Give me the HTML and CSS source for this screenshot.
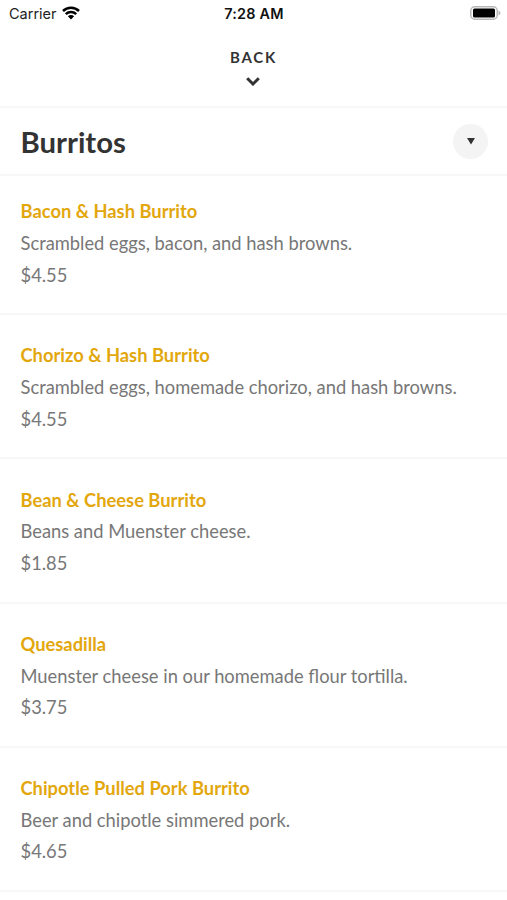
FILE: index.html
```html
<!DOCTYPE html>
<html lang="en">
<head>
<meta charset="utf-8">
<title>Burritos</title>
<link rel="stylesheet" href="styles.css">
</head>
<body>
<div class="status">
  <div class="carrier"><span>Carrier</span>
    <svg class="wifi" viewBox="0 0 18 14" width="18" height="14"><path d="M9 13.500 5.900 10.300a4.400 4.400 0 0 1 6.200 0z" fill="#000"/><path d="M3.800 8.100a7.400 7.400 0 0 1 10.400 0M1 5a11.400 11.400 0 0 1 16 0" fill="none" stroke="#000" stroke-width="2.500"/></svg>
  </div>
  <time class="clock">7:28 AM</time>
  <svg class="battery" viewBox="0 0 31 14" width="31" height="14"><rect x=".75" y=".75" width="26.500" height="12.500" rx="4" fill="#fff" stroke="#b8b8b8" stroke-width="1.500"/><rect x="3" y="2.500" width="22" height="9" rx="1.500" fill="#000"/><path d="M28.500 4.500v5q2-.8 2-2.500t-2-2.500" fill="#b8b8b8"/></svg>
</div>
<header class="back">
  <span class="back-label">BACK</span>
  <svg viewBox="0 0 14 9" width="14" height="9"><path d="m1.200 1.200 5.800 5.800 5.800-5.800" fill="none" stroke="#333" stroke-width="3"/></svg>
</header>
<div class="section">
  <h1>Burritos</h1>
  <button class="toggle" aria-label="Choose section"><svg viewBox="0 0 8 7" width="8" height="7"><path d="M0 0h8L4 6.500z" fill="#333"/></svg></button>
</div>
<main>
  <article><h2>Bacon &amp; Hash Burrito</h2><p>Scrambled eggs, bacon, and hash browns.</p><p>$4.55</p></article>
  <article><h2>Chorizo &amp; Hash Burrito</h2><p>Scrambled eggs, homemade chorizo, and hash browns.</p><p>$4.55</p></article>
  <article><h2>Bean &amp; Cheese Burrito</h2><p>Beans and Muenster cheese.</p><p>$1.85</p></article>
  <article><h2>Quesadilla</h2><p>Muenster cheese in our homemade flour tortilla.</p><p>$3.75</p></article>
  <article><h2>Chipotle Pulled Pork Burrito</h2><p>Beer and chipotle simmered pork.</p><p>$4.65</p></article>
</main>
</body>
</html>
```
FILE: styles.css
```css
* { box-sizing: border-box; margin: 0; padding: 0; }
body { background: #fff; font-family: Lato, sans-serif; color: #333; height: 900px; overflow: hidden; }
.status { display: grid; grid-template-columns: 1fr auto 1fr; align-items: center; height: 27px; padding: 0 8px 0 9px; font: 14.500px Inter, sans-serif; color: #222; }
.carrier { display: flex; align-items: center; gap: 5px; }
.wifi { margin-top: -2px; }
.clock { font-size: 14.400px; font-weight: 600; letter-spacing: .25px; color: #111; }
.battery { justify-self: end; margin-right: -2px; margin-top: -1px; }
.back { height: 81px; padding-top: 21px; display: flex; flex-direction: column; align-items: center; gap: 11px; border-bottom: 2px solid #f7f7f7; }
.back svg { margin-right: 1px; }
.back-label { font-size: 15px; line-height: 18px; font-weight: 700; letter-spacing: 1.700px; }
.section { height: 68px; padding: 0 19px 0 20.500px; display: flex; align-items: center; justify-content: space-between; border-bottom: 2px solid #f7f7f7; }
h1 { font-size: 29.300px; font-weight: 700; line-height: 36px; padding-top: 2px; }
.toggle { width: 35px; height: 35px; border: 0; border-radius: 50%; background: #f4f4f4; display: flex; align-items: center; justify-content: center; }
article { height: 144.200px; padding: 25.200px 20.500px 0; border-bottom: 2px solid #f7f7f7; font-size: 18.330px; line-height: 31.700px; color: #777; white-space: nowrap; }
article:first-child { height: 139.300px; padding-top: 20.300px; }
h2 { font-size: 18.330px; font-weight: 700; color: #e3a70e; }
```
